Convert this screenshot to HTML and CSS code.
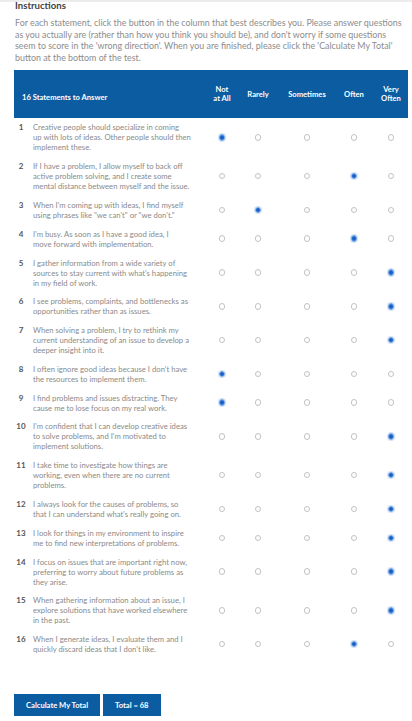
FILE: index.html
```html
<!DOCTYPE html>
<html lang="en">
<head>
<meta charset="utf-8">
<title>Creativity Quiz</title>
<link rel="stylesheet" href="styles.css">
</head>
<body>
<div class="page">
  <h2 class="title">Instructions</h2>
  <p class="intro">For each statement, click the button in the column that best describes you. Please answer questions as you actually are (rather than how you think you should be), and don't worry if some questions seem to score in the 'wrong direction'. When you are finished, please click the 'Calculate My Total' button at the bottom of the test.</p>

  <div class="quiz">
    <div class="quiz-head">
      <div class="head-title">16 Statements to Answer</div>
      <div class="head-opt">Not<br>at All</div>
      <div class="head-opt">Rarely</div>
      <div class="head-opt">Sometimes</div>
      <div class="head-opt">Often</div>
      <div class="head-opt last">Very<br>Often</div>
    </div>

    <div class="q-row"><span class="q-num">1</span><span class="q-text">Creative people should specialize in coming<br>up with lots of ideas. Other people should then<br>implement these.</span>
      <label class="q-opt"><input type="radio" name="q1" checked></label><label class="q-opt"><input type="radio" name="q1"></label><label class="q-opt"><input type="radio" name="q1"></label><label class="q-opt"><input type="radio" name="q1"></label><label class="q-opt last"><input type="radio" name="q1"></label></div>

    <div class="q-row"><span class="q-num">2</span><span class="q-text">If I have a problem, I allow myself to back off<br>active problem solving, and I create some<br>mental distance between myself and the issue.</span>
      <label class="q-opt"><input type="radio" name="q2"></label><label class="q-opt"><input type="radio" name="q2"></label><label class="q-opt"><input type="radio" name="q2"></label><label class="q-opt"><input type="radio" name="q2" checked></label><label class="q-opt last"><input type="radio" name="q2"></label></div>

    <div class="q-row"><span class="q-num">3</span><span class="q-text">When I'm coming up with ideas, I find myself<br>using phrases like "we can't" or "we don't."</span>
      <label class="q-opt"><input type="radio" name="q3"></label><label class="q-opt"><input type="radio" name="q3" checked></label><label class="q-opt"><input type="radio" name="q3"></label><label class="q-opt"><input type="radio" name="q3"></label><label class="q-opt last"><input type="radio" name="q3"></label></div>

    <div class="q-row"><span class="q-num">4</span><span class="q-text">I'm busy. As soon as I have a good idea, I<br>move forward with implementation.</span>
      <label class="q-opt"><input type="radio" name="q4"></label><label class="q-opt"><input type="radio" name="q4"></label><label class="q-opt"><input type="radio" name="q4"></label><label class="q-opt"><input type="radio" name="q4" checked></label><label class="q-opt last"><input type="radio" name="q4"></label></div>

    <div class="q-row"><span class="q-num">5</span><span class="q-text">I gather information from a wide variety of<br>sources to stay current with what's happening<br>in my field of work.</span>
      <label class="q-opt"><input type="radio" name="q5"></label><label class="q-opt"><input type="radio" name="q5"></label><label class="q-opt"><input type="radio" name="q5"></label><label class="q-opt"><input type="radio" name="q5"></label><label class="q-opt last"><input type="radio" name="q5" checked></label></div>

    <div class="q-row"><span class="q-num">6</span><span class="q-text">I see problems, complaints, and bottlenecks as<br>opportunities rather than as issues.</span>
      <label class="q-opt"><input type="radio" name="q6"></label><label class="q-opt"><input type="radio" name="q6"></label><label class="q-opt"><input type="radio" name="q6"></label><label class="q-opt"><input type="radio" name="q6"></label><label class="q-opt last"><input type="radio" name="q6" checked></label></div>

    <div class="q-row"><span class="q-num">7</span><span class="q-text">When solving a problem, I try to rethink my<br>current understanding of an issue to develop a<br>deeper insight into it.</span>
      <label class="q-opt"><input type="radio" name="q7"></label><label class="q-opt"><input type="radio" name="q7"></label><label class="q-opt"><input type="radio" name="q7"></label><label class="q-opt"><input type="radio" name="q7"></label><label class="q-opt last"><input type="radio" name="q7" checked></label></div>

    <div class="q-row"><span class="q-num">8</span><span class="q-text">I often ignore good ideas because I don't have<br>the resources to implement them.</span>
      <label class="q-opt"><input type="radio" name="q8" checked></label><label class="q-opt"><input type="radio" name="q8"></label><label class="q-opt"><input type="radio" name="q8"></label><label class="q-opt"><input type="radio" name="q8"></label><label class="q-opt last"><input type="radio" name="q8"></label></div>

    <div class="q-row"><span class="q-num">9</span><span class="q-text">I find problems and issues distracting. They<br>cause me to lose focus on my real work.</span>
      <label class="q-opt"><input type="radio" name="q9" checked></label><label class="q-opt"><input type="radio" name="q9"></label><label class="q-opt"><input type="radio" name="q9"></label><label class="q-opt"><input type="radio" name="q9"></label><label class="q-opt last"><input type="radio" name="q9"></label></div>

    <div class="q-row"><span class="q-num">10</span><span class="q-text">I'm confident that I can develop creative ideas<br>to solve problems, and I'm motivated to<br>implement solutions.</span>
      <label class="q-opt"><input type="radio" name="q10"></label><label class="q-opt"><input type="radio" name="q10"></label><label class="q-opt"><input type="radio" name="q10"></label><label class="q-opt"><input type="radio" name="q10"></label><label class="q-opt last"><input type="radio" name="q10" checked></label></div>

    <div class="q-row"><span class="q-num">11</span><span class="q-text">I take time to investigate how things are<br>working, even when there are no current<br>problems.</span>
      <label class="q-opt"><input type="radio" name="q11"></label><label class="q-opt"><input type="radio" name="q11"></label><label class="q-opt"><input type="radio" name="q11"></label><label class="q-opt"><input type="radio" name="q11"></label><label class="q-opt last"><input type="radio" name="q11" checked></label></div>

    <div class="q-row"><span class="q-num">12</span><span class="q-text">I always look for the causes of problems, so<br>that I can understand what's really going on.</span>
      <label class="q-opt"><input type="radio" name="q12"></label><label class="q-opt"><input type="radio" name="q12"></label><label class="q-opt"><input type="radio" name="q12"></label><label class="q-opt"><input type="radio" name="q12"></label><label class="q-opt last"><input type="radio" name="q12" checked></label></div>

    <div class="q-row"><span class="q-num">13</span><span class="q-text">I look for things in my environment to inspire<br>me to find new interpretations of problems.</span>
      <label class="q-opt"><input type="radio" name="q13"></label><label class="q-opt"><input type="radio" name="q13"></label><label class="q-opt"><input type="radio" name="q13"></label><label class="q-opt"><input type="radio" name="q13"></label><label class="q-opt last"><input type="radio" name="q13" checked></label></div>

    <div class="q-row"><span class="q-num">14</span><span class="q-text">I focus on issues that are important right now,<br>preferring to worry about future problems as<br>they arise.</span>
      <label class="q-opt"><input type="radio" name="q14"></label><label class="q-opt"><input type="radio" name="q14"></label><label class="q-opt"><input type="radio" name="q14"></label><label class="q-opt"><input type="radio" name="q14"></label><label class="q-opt last"><input type="radio" name="q14" checked></label></div>

    <div class="q-row"><span class="q-num">15</span><span class="q-text">When gathering information about an issue, I<br>explore solutions that have worked elsewhere<br>in the past.</span>
      <label class="q-opt"><input type="radio" name="q15"></label><label class="q-opt"><input type="radio" name="q15"></label><label class="q-opt"><input type="radio" name="q15"></label><label class="q-opt"><input type="radio" name="q15"></label><label class="q-opt last"><input type="radio" name="q15" checked></label></div>

    <div class="q-row"><span class="q-num">16</span><span class="q-text">When I generate ideas, I evaluate them and I<br>quickly discard ideas that I don't like.</span>
      <label class="q-opt"><input type="radio" name="q16"></label><label class="q-opt"><input type="radio" name="q16"></label><label class="q-opt"><input type="radio" name="q16"></label><label class="q-opt"><input type="radio" name="q16" checked></label><label class="q-opt last"><input type="radio" name="q16"></label></div>
  </div>

  <div class="actions">
    <button class="btn" type="button">Calculate My Total</button>
    <button class="btn" type="button">Total = 68</button>
  </div>
</div>
</body>
</html>
```

FILE: styles.css
```css
html, body {
  margin: 0;
  background: #ffffff;
}

body {
  font-family: Lato, "Open Sans", "Liberation Sans", sans-serif;
}

.page {
  border-top: 2px solid #ececec;
  padding: 0 4px 0 14px;
}

.title {
  margin: -1px 0 0 1px;
  font-size: 9.6px;
  line-height: 9px;
  font-weight: 700;
  color: #3f3f3f;
}

.intro {
  margin: 7px 0 7px 1px;
  font-size: 8.9px;
  line-height: 11.5px;
  color: #8c8c8c;
}

.quiz-head,
.q-row {
  display: grid;
  grid-template-columns: 14px 171px 46px 26px 72px 22px 43px;
}

.quiz-head {
  height: 48px;
  background: #0b5ca1;
  color: #ffffff;
  align-items: center;
  font-weight: 700;
  font-size: 7.6px;
  line-height: 9px;
}

.head-title {
  grid-column: 1 / 3;
  padding: 7px 0 0 8px;
}

.head-opt {
  text-align: center;
}

.head-opt.last,
.q-opt.last {
  padding-left: 9px;
}

.q-row {
  padding: 4.4px 0;
  align-items: start;
  font-size: 7.7px;
  line-height: 10px;
}

.q-num {
  text-align: center;
  font-weight: 700;
  font-size: 8px;
  color: #555555;
}

.q-text {
  padding-left: 5px;
  white-space: nowrap;
  color: #8a8a8a;
}

.q-opt {
  align-self: center;
  display: flex;
  justify-content: center;
}

.q-opt input {
  appearance: none;
  -webkit-appearance: none;
  box-sizing: border-box;
  width: 6.5px;
  height: 6.5px;
  margin: 0;
  border: 1px solid #c3c3c3;
  border-radius: 50%;
  background: #ffffff;
}

.q-opt input:checked {
  border-color: #6fa3e6;
  background: radial-gradient(circle, #1a5fc4 0 1.4px, #3a82df 2.2px);
  box-shadow: 0 0 0 1px rgba(80, 140, 220, 0.25);
}

.actions {
  display: flex;
  gap: 3px;
  margin-top: 35px;
}

.btn {
  height: 22px;
  border: none;
  margin: 0;
  padding: 0 12px;
  background: #0b5ca1;
  color: #ffffff;
  font-family: inherit;
  font-weight: 700;
  font-size: 7.6px;
}
```
